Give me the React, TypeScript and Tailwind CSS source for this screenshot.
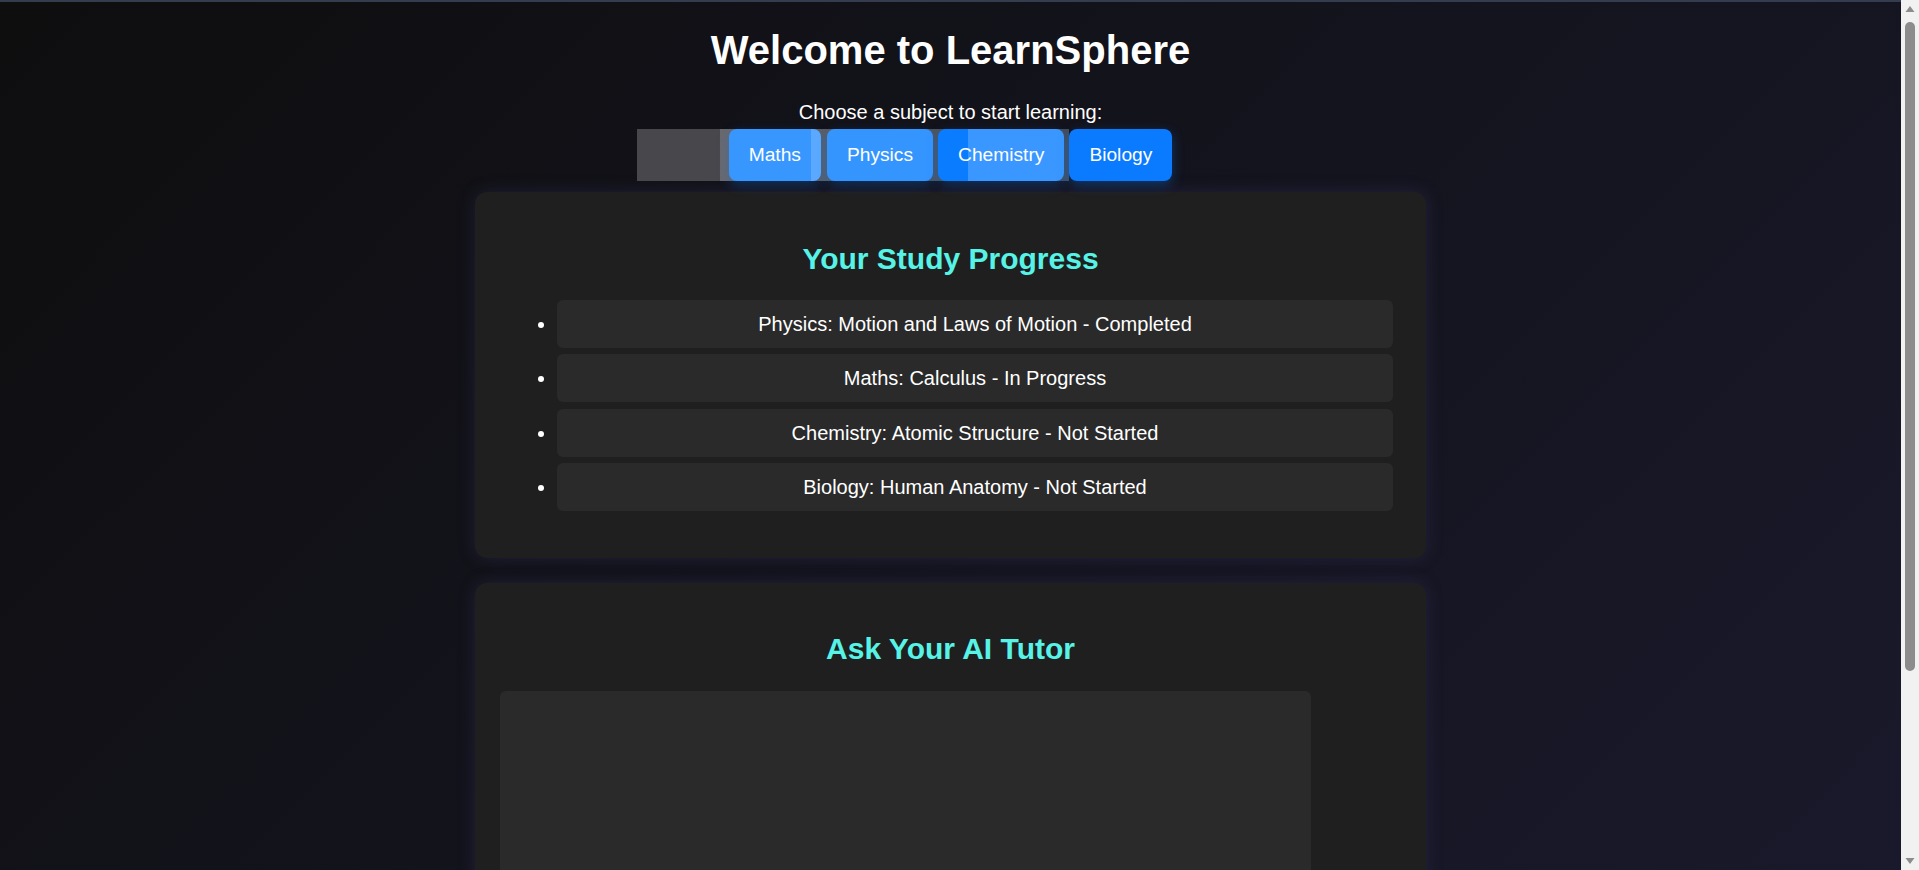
import React from "react";

const items = [
  "Physics: Motion and Laws of Motion - Completed",
  "Maths: Calculus - In Progress",
  "Chemistry: Atomic Structure - Not Started",
  "Biology: Human Anatomy - Not Started",
];

function FakeScrollbar() {
  return (
    <div className="flex h-screen w-[18px] shrink-0 flex-col items-center bg-[#f1f1f1]">
      <svg width="18" height="18" viewBox="0 0 18 18" className="shrink-0">
        <polygon points="4.5,12 13.5,12 9,6" fill="#8c8c8c" />
      </svg>
      <div className="mt-[4px] h-[649px] w-[10px] rounded-full bg-[#8c8c8c]" />
      <div className="flex-1" />
      <svg width="18" height="18" viewBox="0 0 18 18" className="shrink-0">
        <polygon points="4.5,6 13.5,6 9,12" fill="#8c8c8c" />
      </svg>
    </div>
  );
}

export default function App() {
  return (
    <div className="flex h-screen overflow-hidden font-['Liberation_Sans',Arial,sans-serif]">
      <div className="h-screen flex-1 overflow-y-auto [scrollbar-width:none]">
        <div className="min-h-full border-t-2 border-[#343d4d] bg-[linear-gradient(135deg,#0e0e0f_0%,#1a1a2e_100%)] pb-[24px] text-white">
          <h1 className="mt-[25px] text-center text-[40px] font-bold leading-[46px]">
            Welcome to LearnSphere
          </h1>
          <p className="mt-[28px] text-center text-[20px] leading-[23px]">
            Choose a subject to start learning:
          </p>
          <div className="mt-[5px] flex justify-center">
            <div className="flex h-[52px] pr-[92px]">
              <div className="w-[83px] bg-[#48474c]" />
              <div className="flex gap-[5px] bg-[linear-gradient(to_right,#69696e,#5c5d62_30%,#4d525c_65%,#464b56)] pl-[9px] pr-[5px]">
                <button className="mr-[1px] rounded-lg bg-[linear-gradient(to_right,#3896ff_0,#3896ff_82px,#5ba9ff_82px)] px-[20px] text-[19.2px] leading-[22px] text-white shadow-[0_4px_12px_rgba(0,123,255,0.3)]">
                  Maths
                </button>
                <button className="rounded-lg bg-[#3595ff] px-[20px] text-[19.2px] leading-[22px] text-white shadow-[0_4px_12px_rgba(0,123,255,0.3)]">
                  Physics
                </button>
                <button className="rounded-lg bg-[linear-gradient(to_right,#0a7cff_0,#0a7cff_30px,#3a97ff_30px)] px-[20px] text-[19.2px] leading-[22px] text-white shadow-[0_4px_12px_rgba(0,123,255,0.3)]">
                  Chemistry
                </button>
              </div>
              <button className="rounded-lg bg-[#0a7bff] px-[20px] text-[19.2px] leading-[22px] text-white shadow-[0_4px_12px_rgba(0,123,255,0.35)]">
                Biology
              </button>
            </div>
          </div>

          <section className="mx-auto mt-[11px] w-1/2 rounded-xl bg-[#1f1f1f] px-[25px] py-[25px] shadow-[0_0_16px_rgba(60,60,110,0.35)]">
            <h2 className="my-[24.5px] text-center text-[30px] font-bold leading-[34px] text-[#56f3e6]">
              Your Study Progress
            </h2>
            <ul className="mb-[22px] flex list-disc flex-col gap-[6.3px] pl-[57px] pr-[8px]">
              {items.map((t) => (
                <li
                  key={t}
                  className="rounded-md bg-[#2a2a2a] py-[12px] text-center text-[20px] leading-[24px] text-white"
                >
                  {t}
                </li>
              ))}
            </ul>
          </section>

          <section className="mx-auto mt-[25px] w-1/2 rounded-xl bg-[#1f1f1f] px-[25px] py-[25px] shadow-[0_0_16px_rgba(60,60,110,0.35)]">
            <h2 className="my-[24.5px] text-center text-[30px] font-bold leading-[34px] text-[#56f3e6]">
              Ask Your AI Tutor
            </h2>
            <textarea
              className="block h-[200px] w-[90%] resize-none rounded-md bg-[#2a2a2a] p-[10px] text-[16px] text-white outline-none"
              aria-label="Ask a question"
            />
            <button className="mt-[10px] rounded-lg bg-[#0a7bff] px-[20px] py-[15px] text-[19.2px] leading-[22px] text-white">
              Ask
            </button>
            <div className="mt-[20px] min-h-[100px] rounded-md bg-[#2a2a2a]" />
          </section>
        </div>
      </div>
      <FakeScrollbar />
    </div>
  );
}
